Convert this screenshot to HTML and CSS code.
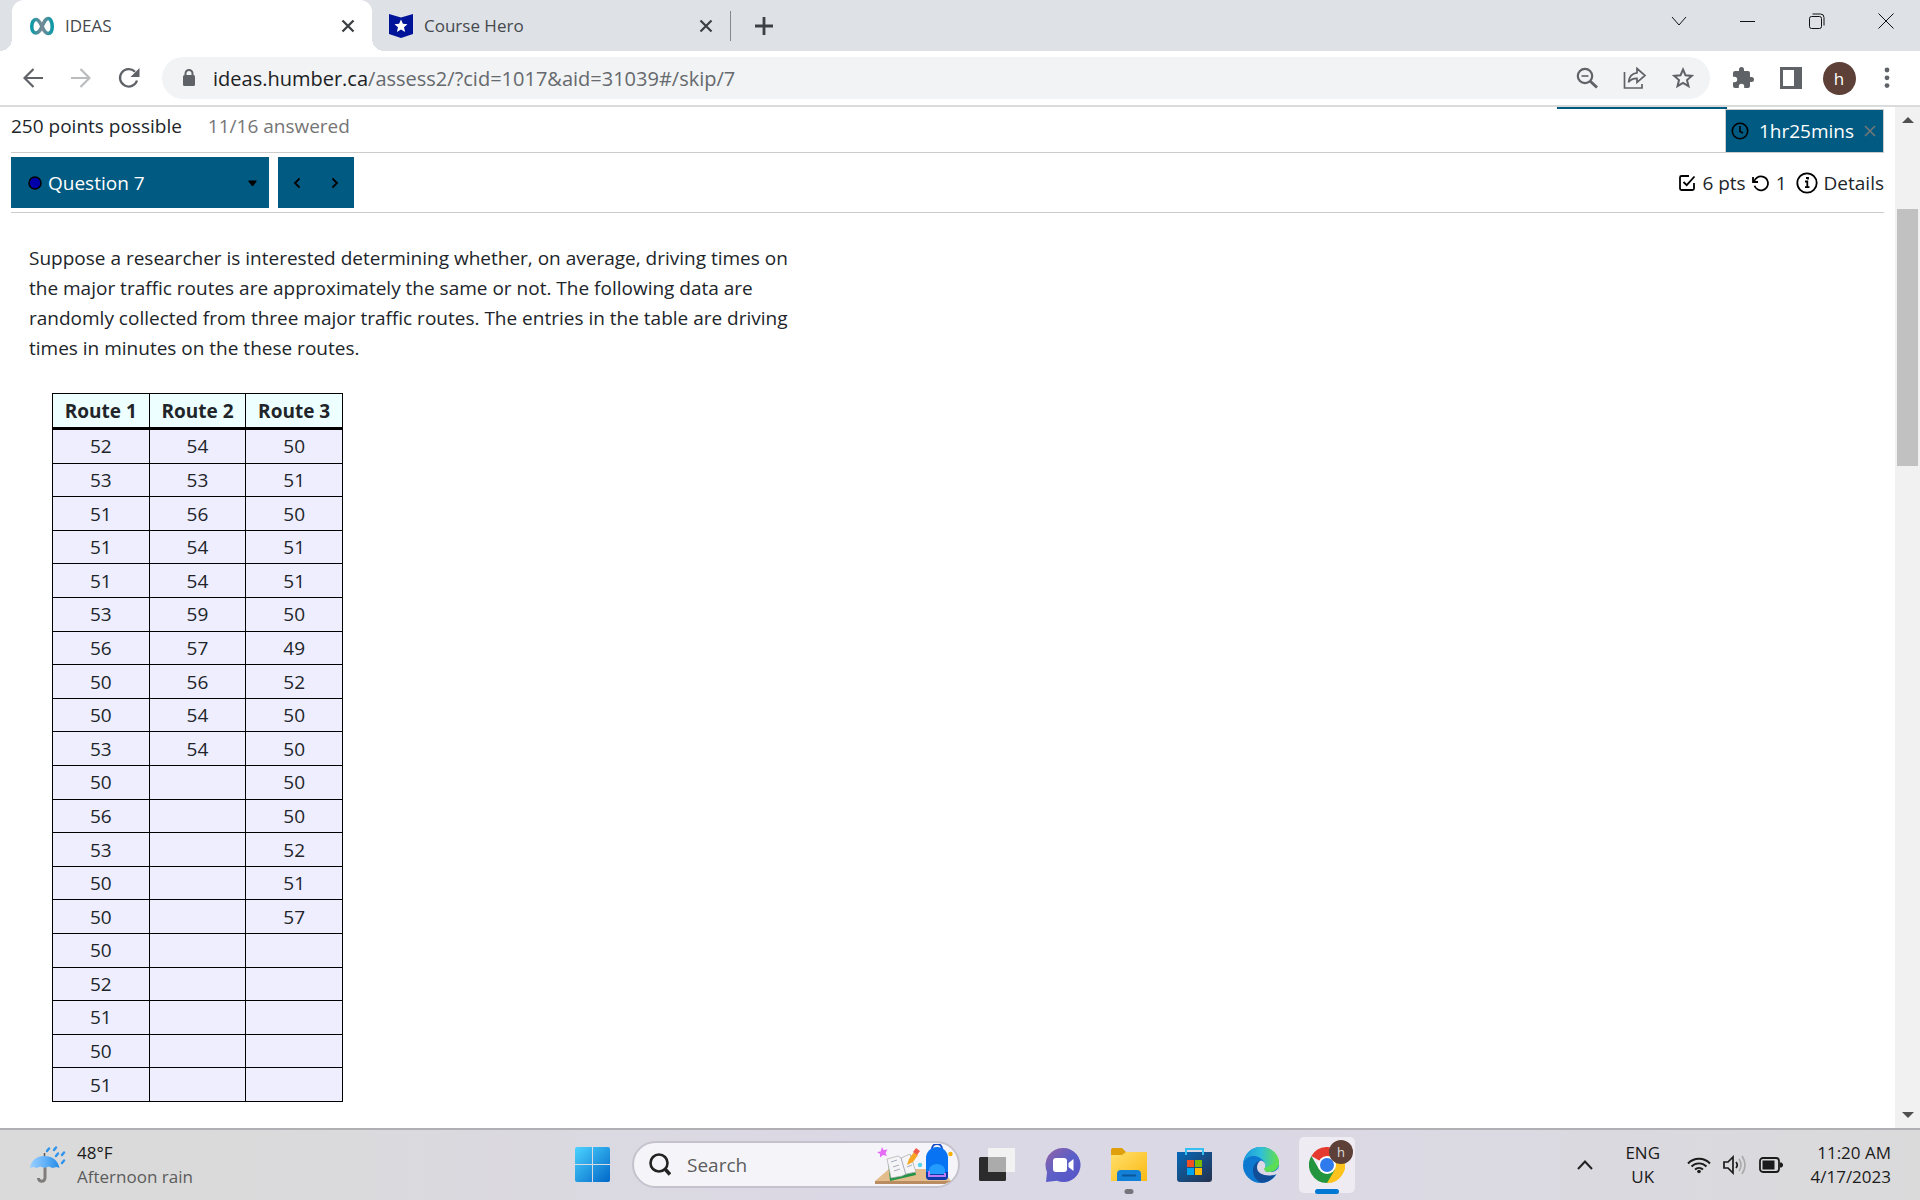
FILE: index.html
```html
<!DOCTYPE html>
<html lang="en">
<head>
<meta charset="utf-8">
<title>IDEAS</title>
<link rel="stylesheet" href="styles.css">
</head>
<body>
<header class="browser">
  <div class="tabstrip">
    <div class="tab tab-active">
      <svg class="favicon" width="24" height="24" viewBox="0 0 24 24" fill="none" stroke-width="3.6"><defs><linearGradient id="inf" x1="0" x2="1"><stop offset="0" stop-color="#0e9aa7"/><stop offset=".5" stop-color="#7d8794"/><stop offset="1" stop-color="#0e9aa7"/></linearGradient></defs><path stroke="url(#inf)" d="M12 12.5C10 8 8.500 5.500 6 5.500S1.800 8.500 1.800 12.500s1.700 6.500 4.200 6.500 4-2 6-6.500 3.500-8 6-8 4.200 3.500 4.200 8-1.700 7-4.200 7-4-2.500-6-7z"/></svg>
      <span class="tab-title">IDEAS</span>
      <button class="tab-close" aria-label="Close IDEAS tab"><svg width="14" height="14" viewBox="0 0 14 14"><path d="M1.500 1.500l11 11M12.500 1.500l-11 11" stroke="#3c4043" stroke-width="2.300"/></svg></button>
    </div>
    <div class="tab">
      <svg class="favicon" width="24" height="24" viewBox="0 0 24 24"><path d="M0 0l12 3.500L24 0v20l-12 4-12-4z" fill="#00149a"/><path d="M12 5.500l1.900 4.300 4.600.500-3.500 3 1.100 4.700-4.100-2.500-4.100 2.500L9 13.300l-3.500-3 4.600-.500z" fill="#fff"/></svg>
      <span class="tab-title">Course Hero</span>
      <button class="tab-close" aria-label="Close Course Hero tab"><svg width="14" height="14" viewBox="0 0 14 14"><path d="M1.500 1.500l11 11M12.500 1.500l-11 11" stroke="#3c4043" stroke-width="2.200"/></svg></button>
    </div>
    <button class="new-tab" aria-label="New tab"><svg width="18" height="18" viewBox="0 0 18 18"><path d="M9 0v18M0 9h18" stroke="#3c4043" stroke-width="2.800"/></svg></button>
    <div class="window-controls">
      <button aria-label="Search tabs"><svg width="16" height="16" viewBox="0 0 16 16"><path d="M1 4l7 8 7-8"/></svg></button>
      <button aria-label="Minimize"><svg width="16" height="16" viewBox="0 0 16 16"><path d="M0 8.500h15"/></svg></button>
      <button aria-label="Restore"><svg width="16" height="16" viewBox="0 0 16 16"><rect x=".5" y="3.500" width="12" height="12" rx="2"/><path d="M3.500 1h8a3.500 3.500 0 0 1 3.500 3.500v8"/></svg></button>
      <button aria-label="Close"><svg width="16" height="16" viewBox="0 0 16 16"><path d="M.5.500l15 15M15.500.500l-15 15"/></svg></button>
    </div>
  </div>
  <div class="toolbar">
    <button class="tool" aria-label="Back"><svg width="20" height="20" viewBox="0 0 20 20" fill="none" stroke="#5f6368" stroke-width="2.200"><path d="M20 10H2M10.500 1L1.500 10l9 9"/></svg></button>
    <button class="tool" aria-label="Forward"><svg width="20" height="20" viewBox="0 0 20 20" fill="none" stroke="#babcbe" stroke-width="2.200"><path d="M0 10h18M9.500 1l9 9-9 9"/></svg></button>
    <button class="tool" aria-label="Reload"><svg width="22" height="22" viewBox="0 0 22 22"><path d="M19 13.500a8.700 8.700 0 1 1-2-8.700" fill="none" stroke="#5f6368" stroke-width="2.300"/><path d="M21.500 1v9h-9z" fill="#5f6368"/></svg></button>
    <div class="omnibox">
      <svg class="lock" width="14" height="18" viewBox="0 0 14 18"><rect x="1" y="6" width="12" height="11" rx="1.500" fill="#5f6368"/><path d="M3.500 7V4.500a3.500 3.500 0 0 1 7 0V7" fill="none" stroke="#5f6368" stroke-width="2"/></svg>
      <div class="url" role="textbox" contenteditable="true" spellcheck="false" aria-label="Address">ideas.humber.ca<span class="url-path">/assess2/?cid=1017&amp;aid=31039#/skip/7</span></div>
      <button class="tool" aria-label="Zoom"><svg width="22" height="22" viewBox="0 0 22 22" fill="none" stroke="#5f6368"><circle cx="9" cy="9" r="7.200" stroke-width="2.200"/><path d="M14 14l7 6.500" stroke-width="3"/><path d="M5.500 9h7" stroke-width="1.600"/></svg></button>
      <button class="tool" aria-label="Share"><svg width="24" height="22" viewBox="0 0 24 22" fill="none" stroke="#5f6368" stroke-width="1.700"><path d="M1.500 5v16H19v-4M14 1.500l8 7-8 7v-4.200c-4 0-6.500 1-8.500 4 .5-5 3.500-9 8.500-9.500z"/></svg></button>
      <button class="tool" aria-label="Bookmark"><svg width="22" height="22" viewBox="0 0 22 22" fill="none" stroke="#5f6368" stroke-width="2"><path d="M11 2.500l2.500 5.800 6.300.600-4.800 4.100 1.500 6.200-5.500-3.300-5.500 3.300L7 13 2.200 8.900l6.300-.600z"/></svg></button>
    </div>
    <button class="tool" aria-label="Extensions"><svg width="24" height="24" viewBox="0 0 24 24" fill="#5f6368"><path d="M20.500 11H19V7a2 2 0 0 0-2-2h-4V3.500a2.500 2.500 0 0 0-5 0V5H4a2 2 0 0 0-2 2v3.800h1.500a2.700 2.700 0 0 1 0 5.400H2V20a2 2 0 0 0 2 2h3.800v-1.500a2.700 2.700 0 0 1 5.400 0V22H17a2 2 0 0 0 2-2v-4h1.500a2.500 2.500 0 0 0 0-5z"/></svg></button>
    <button class="tool" aria-label="Side panel"><svg width="22" height="22" viewBox="0 0 22 22"><path fill-rule="evenodd" fill="#5f6368" d="M0 0h22v22H0zM3 3v16h11V3z"/></svg></button>
    <button class="tool" aria-label="Profile"><span class="avatar">h</span></button>
    <button class="tool" aria-label="Menu"><svg width="6" height="22" viewBox="0 0 6 22" fill="#5f6368"><circle cx="3" cy="3" r="2.400"/><circle cx="3" cy="10.800" r="2.400"/><circle cx="3" cy="18.600" r="2.400"/></svg></button>
  </div>
</header>

<div class="viewport">
  <main class="page">
    <div class="status">
      <span>250 points possible</span>
      <span class="muted">11/16 answered</span>
      <div class="progress"></div>
      <div class="timer">
        <svg width="18" height="18" viewBox="0 0 18 18" fill="none" stroke="#000" stroke-width="1.600"><circle cx="9" cy="9" r="7.700"/><path d="M9 4v5.500l3 1.500"/></svg>
        <span>1hr25mins</span>
        <button aria-label="Hide timer"><svg width="12" height="12" viewBox="0 0 12 12"><path d="M1 1l10 10M11 1L1 11" stroke="#777" stroke-width="1.500"/></svg></button>
      </div>
    </div>
    <div class="question-bar">
      <label class="picker">
        <svg width="14" height="14" viewBox="0 0 14 14"><circle cx="7" cy="7" r="6" fill="#00a" stroke="#000" stroke-width="1.500"/></svg>
        <select aria-label="Question"><option>Question 7</option></select>
        <svg width="9" height="6" viewBox="0 0 9 6"><path d="M.5.500h8v1L5 6H4L.5 1.500z"/></svg>
      </label>
      <div class="pager">
        <button aria-label="Previous question"><svg width="8" height="12" viewBox="0 0 8 12"><path d="M6.500 1.500L2 6l4.500 4.500"/></svg></button>
        <button aria-label="Next question"><svg width="8" height="12" viewBox="0 0 8 12"><path d="M1.500 1.500L6 6l-4.500 4.500"/></svg></button>
      </div>
      <div class="meta">
        <svg width="18" height="18" viewBox="0 0 18 18"><path d="M11 2H3.500A1.500 1.500 0 0 0 2 3.500v11A1.500 1.500 0 0 0 3.500 16h11a1.500 1.500 0 0 0 1.500-1.500V9M5.500 8l3.200 3.200L16.500 2.500"/></svg>
        <span>6 pts</span>
        <svg width="18" height="18" viewBox="0 0 18 18"><path d="M1 3v5h5M2 7.500C3.500 4 6 2.300 9 2.300a7 7 0 1 1-6.500 9.500"/></svg>
        <span>1</span>
        <button class="details"><svg width="22" height="22" viewBox="0 0 22 22"><circle cx="11" cy="11" r="9.700"/><path d="M9 9.500h2.300V15M9 15.200h4.500M10 6h2v1.500"/></svg>Details</button>
      </div>
    </div>
    <article class="question">
      <p>Suppose a researcher is interested determining whether, on average, driving times on<br>the major traffic routes are approximately the same or not. The following data are<br>randomly collected from three major traffic routes. The entries in the table are driving<br>times in minutes on the these routes.</p>
      <table class="data">
        <thead><tr><th>Route 1</th><th>Route 2</th><th>Route 3</th></tr></thead>
        <tbody>
          <tr><td>52</td><td>54</td><td>50</td></tr>
          <tr><td>53</td><td>53</td><td>51</td></tr>
          <tr><td>51</td><td>56</td><td>50</td></tr>
          <tr><td>51</td><td>54</td><td>51</td></tr>
          <tr><td>51</td><td>54</td><td>51</td></tr>
          <tr><td>53</td><td>59</td><td>50</td></tr>
          <tr><td>56</td><td>57</td><td>49</td></tr>
          <tr><td>50</td><td>56</td><td>52</td></tr>
          <tr><td>50</td><td>54</td><td>50</td></tr>
          <tr><td>53</td><td>54</td><td>50</td></tr>
          <tr><td>50</td><td></td><td>50</td></tr>
          <tr><td>56</td><td></td><td>50</td></tr>
          <tr><td>53</td><td></td><td>52</td></tr>
          <tr><td>50</td><td></td><td>51</td></tr>
          <tr><td>50</td><td></td><td>57</td></tr>
          <tr><td>50</td><td></td><td></td></tr>
          <tr><td>52</td><td></td><td></td></tr>
          <tr><td>51</td><td></td><td></td></tr>
          <tr><td>50</td><td></td><td></td></tr>
          <tr><td>51</td><td></td><td></td></tr>
        </tbody>
      </table>
    </article>
  </main>
  <div class="scrollbar">
    <svg width="12" height="6" viewBox="0 0 12 6"><path d="M6 0l6 6H0z" fill="#505050"/></svg>
    <div class="thumb"></div>
    <svg width="12" height="6" viewBox="0 0 12 6"><path d="M0 0h12L6 6z" fill="#505050"/></svg>
  </div>
</div>

<footer class="taskbar">
  <button class="weather">
    <svg width="36" height="38" viewBox="0 0 36 38"><defs><linearGradient id="um" x1="0" x2="1"><stop offset="0" stop-color="#9ad0ff"/><stop offset=".5" stop-color="#64b2f8"/><stop offset="1" stop-color="#238be6"/></linearGradient></defs><path d="M15 20v12a3.300 3.300 0 0 1-6.600 0" fill="none" stroke="#817c7c" stroke-width="3"/><path d="M14.500 7v4" stroke="#555" stroke-width="1.500"/><path d="M0 22C1 14 7 10 14.500 10S28 14 29.500 22l-3-1-4 1-4-1.500-4 1.500-4-1.500-4 1.500-3-1z" fill="url(#um)"/><path d="M17 5l2-2.500M24 4l2-2.500M26 10l2-2.500M32 9l2-2.500M32 17l2-2.500" stroke="#2f93ec" stroke-width="2.400" stroke-linecap="round"/></svg>
    <span class="lines"><span class="temp">48°F</span><span class="forecast">Afternoon rain</span></span>
  </button>
  <nav class="apps" aria-label="Apps">
    <button class="app" aria-label="Start"><svg width="36" height="36" viewBox="0 0 36 36"><defs><linearGradient id="win" x1="0" y1="0" x2="1" y2="1"><stop offset="0" stop-color="#4cd3ff"/><stop offset="1" stop-color="#0067c8"/></linearGradient></defs><path fill="url(#win)" d="M2 0h15v17H0V2a2 2 0 0 1 2-2zM18 0h15a2 2 0 0 1 2 2v15H18zM0 18h17v17H2a2 2 0 0 1-2-2zM18 18h17v15a2 2 0 0 1-2 2H18z"/></svg></button>
    <label class="search">
      <svg width="22" height="23" viewBox="0 0 22 23" fill="none" stroke="#222"><circle cx="10" cy="10" r="8.500" stroke-width="2.600"/><path d="M16 16l5 5.500" stroke-width="3.500"/></svg>
      <input type="text" placeholder="Search" aria-label="Search">
      <svg class="art" width="80" height="42" viewBox="0 0 80 42"><path d="M16 25h53l9 12H2z" fill="#e4bd8c"/><path d="M2 37h76l-6 3H2z" fill="#b98d61"/><path d="M15 18l23-7 5 20-26 6z" fill="#239447"/><path d="M14 15l11-3 3 2 9-4 6 18-10 2-4 2-11 2z" fill="#f5f5f7" stroke="#aaa" stroke-width=".7"/><path d="M28 14l5 17M18 18l6-2M20 23l6-2M21 27l6-2M34 23l5-2" stroke="#aab" stroke-width="1"/><path d="M34 21l2-6 5-7 4 3-5 7z" fill="#f6a623"/><path d="M40 8l3-4 4 3-3 4z" fill="#f15b4c"/><path d="M9 3l1.500 3 4-.5-2 3.500 1.500 3-4-1-3 2.500V10L4 8l3.500-.500z" fill="#e56cf5"/><path d="M59 5a5 5 0 0 1 10 0" fill="none" stroke="#164bc8" stroke-width="2"/><path d="M53 14a11 11 0 0 1 22 0v18a4 4 0 0 1-4 4H57a4 4 0 0 1-4-4z" fill="#0874f4"/><path d="M53 28h22v4a4 4 0 0 1-4 4H57a4 4 0 0 1-4-4z" fill="#103aa8"/><path d="M56 30v-4a8 6 0 0 1 16 0v4z" fill="#249bff"/><path d="M56 27v5h16v-3" fill="none" stroke="#ba7bf5" stroke-width="2"/><circle cx="77.500" cy="10" r="2.200" fill="#fab005"/><circle cx="47" cy="21" r="2.200" fill="#55d3ec"/></svg>
    </label>
    <button class="app" aria-label="Task view"><svg width="36" height="36" viewBox="0 0 36 36"><rect y="10" width="27" height="24" rx="1.500" fill="#2c2c2c"/><rect x="9" y="1" width="27" height="24" rx="1" fill="#f2f2f2"/><path d="M9 10h18v15H9z" fill="#ababab"/></svg></button>
    <button class="app" aria-label="Chat"><svg width="36" height="36" viewBox="0 0 36 36"><defs><linearGradient id="chat" x1="0" y1="0" x2="1" y2="1"><stop offset="0" stop-color="#9562a5"/><stop offset=".5" stop-color="#5b5fc7"/><stop offset="1" stop-color="#5552c8"/></linearGradient></defs><path d="M18 1a17 17 0 1 1-6 32.700L1 35l1-10A17 17 0 0 1 18 1z" fill="url(#chat)"/><rect x="8" y="11" width="14" height="14" rx="3" fill="#fff"/><path d="M23.500 16l5-4v12l-5-4z" fill="#fff"/></svg></button>
    <button class="app app-open" aria-label="File Explorer"><svg width="36" height="36" viewBox="0 0 36 36"><defs><linearGradient id="fold" x1="0" y1="0" x2="1" y2="1"><stop offset="0" stop-color="#ffe06e"/><stop offset="1" stop-color="#fbb912"/></linearGradient></defs><path d="M0 3a2 2 0 0 1 2-2h9l4 4v5H0z" fill="#dfa00b"/><path d="M0 8h11l4-3h21v29H0z" fill="url(#fold)"/><path d="M6 34V27a4 4 0 0 1 4-4h16a4 4 0 0 1 4 4v7z" fill="#1180d6"/><path d="M11 28.500h14" stroke="#0b5698" stroke-width="2"/></svg></button>
    <button class="app" aria-label="Microsoft Store"><svg width="36" height="36" viewBox="0 0 36 36"><defs><linearGradient id="store" x1="0" y1="0" x2="1" y2="1"><stop offset="0" stop-color="#0669b8"/><stop offset="1" stop-color="#26314f"/></linearGradient></defs><path d="M0 5h35v27a3 3 0 0 1-3 3H3a3 3 0 0 1-3-3z" fill="url(#store)"/><path d="M9 8V2h17v6" fill="none" stroke="#35bff0" stroke-width="2"/><path d="M10 13h7v7h-7z" fill="#f25022"/><path d="M18 13h7v7h-7z" fill="#7fba00"/><path d="M10 21h7v7h-7z" fill="#00a4ef"/><path d="M18 21h7v7h-7z" fill="#ffb900"/></svg></button>
    <button class="app" aria-label="Edge"><svg width="36" height="36" viewBox="0 0 36 36"><defs><linearGradient id="edge" x1="0" x2="1"><stop offset="0" stop-color="#1b95de"/><stop offset=".5" stop-color="#2fc0d8"/><stop offset="1" stop-color="#66e045"/></linearGradient></defs><path d="M0 18a18 18 0 1 0 18-18C8 0 1 7 0 18z" fill="#0d78cf"/><path d="M0 17C1 7 8 0 18 0c11 0 18 8 18 15 0 6-4 9-9 9-4 0-6-1-5-4 1-3-1-7-5-9C11 7 3 9 0 17z" fill="url(#edge)"/><path d="M18 13.500c-5 1-8 5-8 10 0 6 4 11 9 12.300C26 35 31 31 33 26.500c-8 4-18 1-18-7 0-3 1-5 3-6z" fill="#124d98"/><path d="M18 13.500c4 1 5 4 4 7-1 4 2 5 7 4.500 4-.5 6-3 7-6l-1 7.500c-8 4-21 2-21-6 0-3 1.500-6 4-7z" fill="#dcd8e5"/><path d="M21.500 21c-1 3 1.500 4 5.500 4 4-.2 7-2 9-8v-3z" fill="#5cdd56"/></svg></button>
    <button class="app app-current" aria-label="Chrome"><svg width="36" height="36" viewBox="0 0 36 36"><path d="M18 18L2.400 9A18 18 0 0 1 33.600 9z" fill="#e53a30"/><path d="M18 18l15.600-9A18 18 0 0 1 18 36z" fill="#fcc31e"/><path d="M18 9h15.600A18 18 0 0 1 18 36l8-14z" fill="#fcc31e"/><path d="M2.400 9A18 18 0 0 0 18 36l8-13.500H18L10.200 22.500z" fill="#24953f"/><circle cx="18" cy="18" r="9" fill="#fff"/><circle cx="18" cy="18" r="7" fill="#2f7bee"/></svg><span class="badge">h</span></button>
  </nav>
  <div class="tray">
    <button aria-label="Show hidden icons"><svg width="16" height="10" viewBox="0 0 16 10" fill="none" stroke="#222" stroke-width="2"><path d="M1 9l7-7.500L15 9"/></svg></button>
    <button class="lang"><span>ENG</span><span>UK</span></button>
    <button class="system" aria-label="Network, volume and battery">
      <svg width="24" height="18" viewBox="0 0 24 18" fill="none" stroke="#1b1b1b" stroke-width="1.900"><path d="M1 7.500a15 15 0 0 1 22 0M4.500 10.500a10.500 10.500 0 0 1 15 0M8 13.500a6 6 0 0 1 8 0"/><circle cx="12" cy="15.500" r="1.800" fill="#1b1b1b" stroke="none"/></svg>
      <svg width="24" height="20" viewBox="0 0 24 20" fill="none" stroke="#1b1b1b" stroke-width="1.700"><path d="M1 7h4l5-5v16l-5-5H1zM13 7q2.500 3 0 6"/><path d="M16 4q4 6 0 12M19 1q6 9 0 18" stroke="#aaa"/></svg>
      <svg width="24" height="16" viewBox="0 0 24 16"><rect x="1" y="1" width="19" height="14" rx="3" fill="none" stroke="#1b1b1b" stroke-width="1.800"/><path d="M3.500 3.500h12v9h-12zM21 5.500h1.500L24 7v2l-1.500 1.500H21z" fill="#1b1b1b"/></svg>
    </button>
    <button class="clock"><span>11:20 AM</span><span>4/17/2023</span></button>
  </div>
</footer>
</body>
</html>
```
FILE: styles.css
```css
* { box-sizing: border-box; }

body {
  margin: 0;
  height: 100vh;
  display: flex;
  flex-direction: column;
  overflow: hidden;
  background: #fff;
  color: #212529;
  font-family: "Open Sans", "Noto Sans", sans-serif;
  font-size: 19px;
  line-height: 30px;
}

button {
  padding: 0;
  border: 0;
  background: none;
  color: inherit;
  font: inherit;
}

svg { display: block; flex: none; }

/* Browser tabs */
.tabstrip {
  display: flex;
  height: 51px;
  padding-left: 12px;
  background: #dee1e6;
}

.tab {
  display: flex;
  align-items: center;
  gap: 11px;
  width: 358px;
  padding: 0 17px;
  color: #45494d;
  font-size: 17px;
}

.tab-active {
  position: relative;
  width: 360px;
  padding: 0 17px 0 18px;
  border-radius: 12px 12px 0 0;
  background: #fff;
}

.tab-active::before,
.tab-active::after {
  content: "";
  position: absolute;
  bottom: 0;
  width: 12px;
  height: 12px;
}

.tab-active::before {
  right: 100%;
  background: radial-gradient(circle at 0 0, transparent 12px, #fff 12px);
}

.tab-active::after {
  left: 100%;
  background: radial-gradient(circle at 100% 0, transparent 12px, #fff 12px);
}

.tab-title { flex: 1; }

.new-tab {
  display: grid;
  place-items: center;
  align-self: center;
  width: 66px;
  height: 30px;
  border-left: 1px solid #84888c;
}

.window-controls {
  display: flex;
  height: 42px;
  margin-left: auto;
}

.window-controls button {
  display: grid;
  place-items: center;
  width: 69px;
}

.window-controls svg { fill: none; stroke: #111; }

/* Address bar */
.toolbar {
  display: flex;
  align-items: center;
  height: 56px;
  padding: 0 9px;
  border-bottom: 2px solid #dadbdd;
}

.tool {
  display: grid;
  place-items: center;
  width: 48px;
  height: 42px;
}

.omnibox {
  flex: 1;
  display: flex;
  align-items: center;
  height: 42px;
  margin: 0 9px;
  padding: 0 3px 0 20px;
  border-radius: 21px;
  background: #f1f3f4;
}

.url {
  flex: 1;
  padding: 1px 0 0 17px;
  color: #202124;
  font-size: 20px;
}

.url-path { color: #66696d; }

.avatar {
  width: 33px;
  height: 33px;
  border-radius: 50%;
  background: #5d4037;
  color: #fff;
  font-size: 17px;
  line-height: 33px;
}

/* Assessment page */
.viewport {
  flex: 1;
  display: flex;
  min-height: 0;
}

.page {
  flex: 1;
  padding: 0 11px;
}

.status {
  display: flex;
  gap: 26px;
  height: 46px;
  padding-top: 4px;
  border-bottom: 1px solid #ccc;
}

.muted { color: #757575; }

.progress {
  width: 170px;
  height: 2px;
  margin: -4px -28px 0 auto;
  background: #005a82;
}

.timer {
  display: flex;
  align-items: center;
  gap: 10px;
  height: 44px;
  margin-top: -2px;
  padding: 0 7px 0 5px;
  border: 1px solid #ccc;
  background: #005a82;
  color: #fff;
}

.question-bar {
  display: flex;
  align-items: center;
  gap: 9px;
  height: 60px;
  border-bottom: 1px solid #ccc;
}

.picker {
  display: flex;
  align-items: center;
  gap: 6px;
  width: 258px;
  height: 51px;
  padding: 0 12px 0 17px;
  background: #005a82;
}

.picker select {
  flex: 1;
  appearance: none;
  padding: 0;
  border: 0;
  background: none;
  color: #fff;
  font: inherit;
}

.pager {
  display: flex;
  width: 76px;
  height: 51px;
  background: #005a82;
}

.pager button {
  flex: 1;
  display: grid;
  place-items: center;
}

.pager svg,
.meta svg {
  fill: none;
  stroke: #000;
  stroke-width: 1.8;
}

.meta {
  display: flex;
  align-items: center;
  gap: 6px;
  margin-left: auto;
}

.details {
  display: flex;
  align-items: center;
  gap: 6px;
  margin-left: 3px;
}

.question { padding: 30px 18px 0; }

.question p { margin: 0 0 30px; }

.data {
  width: 291px;
  height: 709px;
  margin-left: 23px;
  border-collapse: collapse;
  table-layout: fixed;
  text-align: center;
}

.data th,
.data td {
  padding: 0;
  border: 1px solid #000;
}

.data th {
  height: 35px;
  border-bottom-width: 3px;
  background: #eff;
}

.data td { background: #eef; }

.scrollbar {
  display: flex;
  flex-direction: column;
  align-items: center;
  width: 25px;
  padding: 10px 0;
  background: #f1f1f1;
}

.thumb {
  width: 21px;
  height: 257px;
  margin: 86px 0 auto;
  background: #c1c1c1;
}

/* Taskbar */
.taskbar {
  display: grid;
  grid-template-columns: 1fr auto 1fr;
  height: 72px;
  padding-bottom: 1px;
  border-top: 2px solid #b0afb4;
  background: linear-gradient(90deg, #dadada 10%, #dbd8e5 45%, #dbd8e5 65%, #dadadb);
  color: #1b1b1b;
  font-size: 17px;
  line-height: 24px;
}

.weather {
  display: flex;
  align-items: center;
  gap: 11px;
  padding-left: 30px;
  text-align: left;
}

.lines,
.lang,
.clock {
  display: flex;
  flex-direction: column;
}

.forecast { color: #5c5c5c; }

.apps {
  display: flex;
  align-items: center;
}

.app {
  position: relative;
  display: grid;
  place-items: center;
  width: 56px;
  height: 56px;
  margin: 0 5px;
  border-radius: 5px;
}

.app-open::after,
.app-current::after {
  content: "";
  position: absolute;
  bottom: -1px;
  left: 50%;
  width: 9px;
  height: 5px;
  border-radius: 3px;
  background: #77757c;
  transform: translateX(-50%);
}

.app-current { background: #eeecf2; }

.app-current::after {
  width: 24px;
  background: #0078d4;
}

.badge {
  position: absolute;
  top: 3px;
  right: 2px;
  width: 24px;
  height: 24px;
  border-radius: 50%;
  background: #5d4037;
  color: #ddd;
  font-size: 13px;
}

.search {
  display: flex;
  align-items: center;
  gap: 16px;
  width: 328px;
  height: 47px;
  margin: 0 4px 0 6px;
  padding: 0 5px 0 15px;
  border: 2px solid #c5c2cd;
  border-radius: 24px;
  background: #f5f4f8;
}

.search input {
  flex: 1;
  min-width: 0;
  padding: 0;
  border: 0;
  background: none;
  font: inherit;
  font-size: 19px;
}

.search input::placeholder { color: #5c5c5c; }

.tray {
  display: flex;
  align-items: center;
  justify-content: flex-end;
  padding-right: 29px;
}

.lang {
  align-items: center;
  margin: 0 27px 0 32px;
}

.system {
  display: flex;
  align-items: center;
  gap: 12px;
}

.clock {
  width: 84px;
  margin-left: 24px;
  align-items: flex-end;
  white-space: nowrap;
}
```
